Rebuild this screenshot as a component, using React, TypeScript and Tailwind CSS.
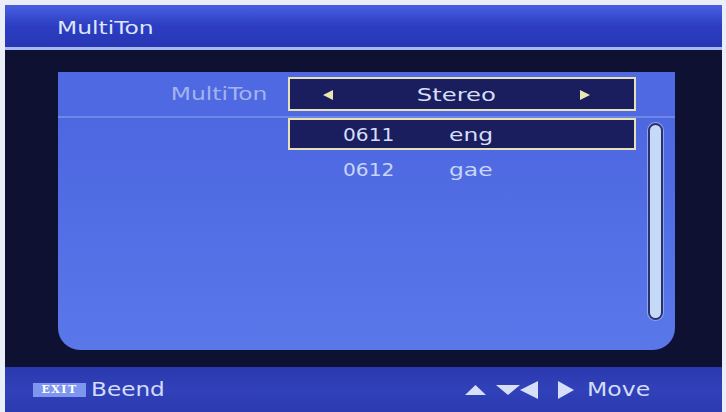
export default function App() {
  return (
    <div className="w-[726px] h-[412px] bg-[#e9eef7] pt-[5px] pl-[5px] pr-[4px] font-['DejaVu_Sans',sans-serif] overflow-hidden">
      <div className="flex h-full flex-col bg-[#0e1131]">
        {/* Title bar */}
        <div className="h-[42px] shrink-0 bg-gradient-to-b from-[#4a5fe0] via-[#2c3dc2] to-[#2737b4] flex items-center pl-[52px] pt-[4px]">
          <span className="inline-block origin-left scale-x-[1.3] text-[18px] leading-none text-[#dde5fb]">MultiTon</span>
        </div>
        <div className="h-[3px] shrink-0 bg-[#a9b9f2]" />

        {/* Content area */}
        <div className="flex-1 pt-[22px] pl-[53px] pr-[47px] pb-[17px]">
          <div className="h-full flex flex-col rounded-b-[22px] bg-gradient-to-b from-[#4a64de] to-[#5a77ea] overflow-hidden">
            <div className="h-[44px] shrink-0 flex items-center bg-[#4f69e2]">
              <div className="w-[210px] text-right pr-[1px] pt-[2px]">
                <span className="inline-block origin-right scale-x-[1.3] text-[18px] leading-none text-[#a3b3ee]">MultiTon</span>
              </div>
              <div className="ml-[20px] w-[348px] h-[34px] border-2 border-[#e6e2b6] bg-[#1b1e5e] flex items-center relative">
                <svg width="10" height="10" viewBox="0 0 10 10" className="ml-[33px] mt-[2px]">
                  <polygon points="0,5 10,0 10,10" fill="#ebe4b4" />
                </svg>
                <div className="flex-1 text-center pt-[3px]">
                  <span className="inline-block scale-x-[1.35] text-[18px] leading-none text-[#d6def8]">Stereo</span>
                </div>
                <svg width="10" height="10" viewBox="0 0 10 10" className="mr-[44px] mt-[2px]">
                  <polygon points="0,0 10,5 0,10" fill="#ebe4b4" />
                </svg>
              </div>
            </div>
            <div className="h-[2px] shrink-0 bg-[#7187e6]" />
            <div className="flex">
              <div className="ml-[230px] w-[348px] flex flex-col gap-[3px]">
                <div className="h-[32px] border-2 border-[#e6e2b6] bg-[#1b1e5e] flex items-center pt-[2px]">
                  <span className="ml-[53px] w-[106px] inline-block origin-left scale-x-[1.12] text-[18px] leading-none text-[#d6def8]">0611</span>
                  <span className="inline-block origin-left scale-x-[1.3] text-[18px] leading-none text-[#d6def8]">eng</span>
                </div>
                <div className="h-[32px] flex items-center pt-[2px]">
                  <span className="ml-[55px] w-[106px] inline-block origin-left scale-x-[1.12] text-[18px] leading-none text-[#c9d5f8]">0612</span>
                  <span className="inline-block origin-left scale-x-[1.3] text-[18px] leading-none text-[#c9d5f8]">gae</span>
                </div>
              </div>
              <div className="ml-[12px] mt-[5px] w-[15px] h-[197px] rounded-full border-2 border-[#2a326e] bg-[#c6d9f6] shadow-[0_0_0_1px_#8ea4ee]" />
            </div>
          </div>
        </div>

        {/* Bottom bar */}
        <div className="h-[45px] shrink-0 bg-gradient-to-b from-[#2a39ae] via-[#3141b9] to-[#2b3ab0] flex items-center pl-[28px] pr-[72px]">
          <div className="h-[14px] w-[53px] bg-[#7f96ee] flex items-center justify-center">
            <span className="font-['DejaVu_Serif',serif] font-bold text-[11px] leading-none text-white tracking-[1.5px]">EXIT</span>
          </div>
          <span className="ml-[5px] inline-block origin-left scale-x-[1.22] text-[19px] leading-none text-[#d3dcf8]">Beend</span>
          <div className="flex-1" />
          <div className="flex items-center">
            <svg width="21" height="10" viewBox="0 0 21 10">
              <polygon points="10.5,0 21,10 0,10" fill="#d6def8" />
            </svg>
            <svg width="24" height="10" viewBox="0 0 24 10" className="ml-[10px]">
              <polygon points="0,0 24,0 12,10" fill="#d6def8" />
            </svg>
            <svg width="18" height="18" viewBox="0 0 18 18">
              <polygon points="0,9 18,0 18,18" fill="#d6def8" />
            </svg>
            <svg width="16" height="18" viewBox="0 0 16 18" className="ml-[20px]">
              <polygon points="0,0 16,9 0,18" fill="#d6def8" />
            </svg>
            <span className="ml-[13px] w-[63px] inline-block origin-left scale-x-[1.24] text-[19px] leading-none text-[#d3dcf8]">Move</span>
          </div>
        </div>
      </div>
    </div>
  );
}
